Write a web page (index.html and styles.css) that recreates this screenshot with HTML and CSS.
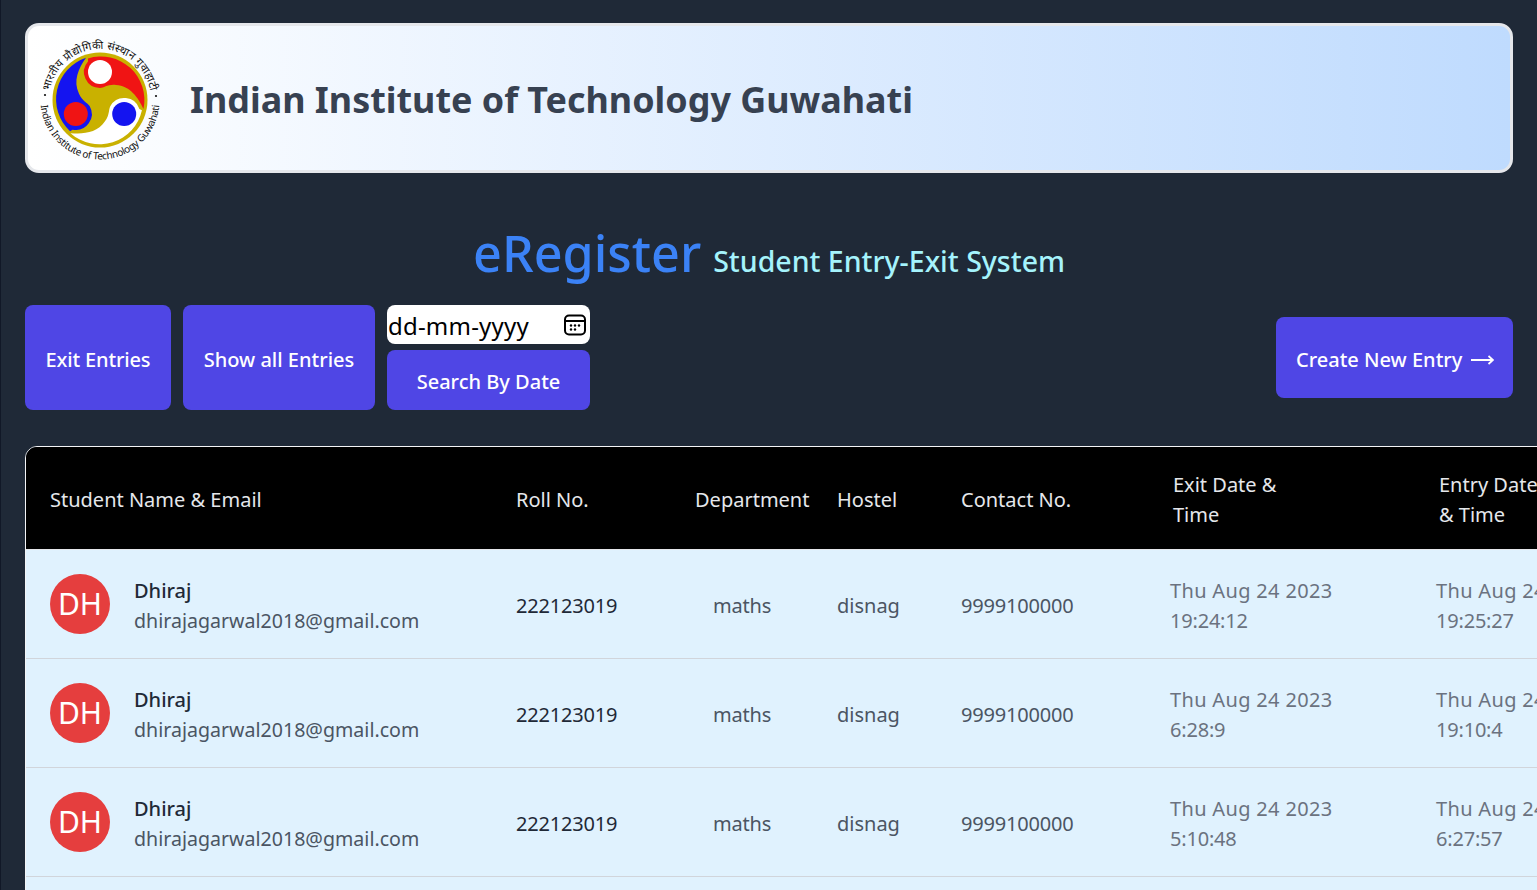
FILE: index.html
```html
<!DOCTYPE html>
<html lang="en">
<head>
<meta charset="utf-8">
<title>eRegister</title>
<link rel="stylesheet" href="styles.css">
</head>
<body>
<header class="banner">
  <svg class="logo" viewBox="-62 -62 124 124" width="124" height="124" aria-label="IIT Guwahati logo">
    <defs>
      <path id="lobe" d="M-12,-41.5 A43.5,43.5 0 0 1 43.5,9 C38,-3 30,-14 16,-15 C8,-16 4,-12 0,-12 A16,16 0 0 1 -12,-38.6 Z"/>
      <path id="top-arc" d="M-51,0 A51,51 0 0 1 51,0"/>
      <path id="bottom-arc" d="M-59.5,0 A59.5,59.5 0 0 0 59.5,0"/>
    </defs>
    <circle r="47.5" class="logo-disc"/>
    <use href="#lobe" class="logo-red"/>
    <use href="#lobe" class="logo-blue" transform="rotate(-120)"/>
    <use href="#lobe" class="logo-white" transform="rotate(120)"/>
    <circle cy="-28" r="12" class="logo-white"/>
    <circle cx="-24.2" cy="14" r="12" class="logo-red"/>
    <circle cx="24.2" cy="14" r="12" class="logo-blue"/>
    <text class="logo-text logo-hindi"><textPath href="#top-arc" startOffset="50%" text-anchor="middle" textLength="142">भारतीय प्रौद्योगिकी संस्थान गुवाहाटी</textPath></text>
    <text class="logo-text"><textPath href="#bottom-arc" startOffset="50%" text-anchor="middle" textLength="176">Indian Institute of Technology Guwahati</textPath></text>
    <circle cx="-55" cy="-5" r="1.1" class="logo-dot"/>
    <circle cx="56" cy="-4" r="1.1" class="logo-dot"/>
  </svg>
  <h1 class="banner-title">Indian Institute of Technology Guwahati</h1>
</header>

<div class="heading">
  <span class="heading-main">eRegister</span>
  <span class="heading-sub">Student Entry-Exit System</span>
</div>

<div class="toolbar">
  <div class="toolbar-left">
    <button class="btn btn-exit">Exit Entries</button>
    <button class="btn btn-all">Show all Entries</button>
    <form class="date-search">
      <div class="date-input">
        <span class="date-text">dd-mm-yyyy</span>
        <svg class="cal" viewBox="0 0 24 24" width="24" height="24">
          <rect x="2" y="2.5" width="20" height="19" rx="4" fill="none" stroke="#000" stroke-width="2"/>
          <path d="M3 8H21" stroke="#000" stroke-width="2"/>
          <g fill="#000">
            <circle cx="8" cy="12.5" r="1.2"/><circle cx="12" cy="12.5" r="1.2"/><circle cx="16" cy="12.5" r="1.2"/>
            <circle cx="8" cy="16.5" r="1.2"/><circle cx="12" cy="16.5" r="1.2"/>
          </g>
        </svg>
      </div>
      <button class="btn btn-search" type="button">Search By Date</button>
    </form>
  </div>
  <button class="btn btn-create">Create New Entry
    <svg viewBox="0 0 24 24" width="24" height="24" class="arrow"><path d="M1 12H23M18.5 8L23 12L18.5 16" fill="none" stroke="#fff" stroke-width="1.8"/></svg>
  </button>
</div>

<div class="table-wrap">
  <table class="entries">
    <colgroup>
      <col class="c-name"><col class="c-roll"><col class="c-dept"><col class="c-hostel"><col class="c-contact"><col class="c-exit"><col class="c-entry">
    </colgroup>
    <thead>
      <tr>
        <th>Student Name &amp; Email</th><th>Roll No.</th><th>Department</th><th>Hostel</th><th>Contact No.</th><th>Exit Date &amp;<br>Time</th><th>Entry Date<br>&amp; Time</th>
      </tr>
    </thead>
    <tbody>
      <tr>
        <td class="cell-person"><div class="person"><span class="avatar">DH</span><div class="who"><span class="name">Dhiraj</span><span class="email">dhirajagarwal2018@gmail.com</span></div></div></td>
        <td class="dark">222123019</td><td class="center">maths</td><td>disnag</td><td class="num">9999100000</td>
        <td class="date"><span class="day">Thu Aug 24 2023</span><br>19:24:12</td><td class="date"><span class="day">Thu Aug 24 2023</span><br>19:25:27</td>
      </tr>
      <tr>
        <td class="cell-person"><div class="person"><span class="avatar">DH</span><div class="who"><span class="name">Dhiraj</span><span class="email">dhirajagarwal2018@gmail.com</span></div></div></td>
        <td class="dark">222123019</td><td class="center">maths</td><td>disnag</td><td class="num">9999100000</td>
        <td class="date"><span class="day">Thu Aug 24 2023</span><br>6:28:9</td><td class="date"><span class="day">Thu Aug 24 2023</span><br>19:10:4</td>
      </tr>
      <tr>
        <td class="cell-person"><div class="person"><span class="avatar">DH</span><div class="who"><span class="name">Dhiraj</span><span class="email">dhirajagarwal2018@gmail.com</span></div></div></td>
        <td class="dark">222123019</td><td class="center">maths</td><td>disnag</td><td class="num">9999100000</td>
        <td class="date"><span class="day">Thu Aug 24 2023</span><br>5:10:48</td><td class="date"><span class="day">Thu Aug 24 2023</span><br>6:27:57</td>
      </tr>
      <tr>
        <td class="cell-person"><div class="person"><span class="avatar">DH</span><div class="who"><span class="name">Dhiraj</span><span class="email">dhirajagarwal2018@gmail.com</span></div></div></td>
        <td class="dark">222123019</td><td class="center">maths</td><td>disnag</td><td class="num">9999100000</td>
        <td class="date"><span class="day">Thu Aug 24 2023</span><br>5:1:20</td><td class="date"><span class="day">Thu Aug 24 2023</span><br>5:9:11</td>
      </tr>
    </tbody>
  </table>
</div>
</body>
</html>
```
FILE: styles.css
```css
* { box-sizing: border-box; }
html { overflow: hidden; height: 100%; }
body {
  margin: 0;
  padding: 23px 24px 0 24px;
  border-left: 1px solid #111827;
  background: #1f2937;
  font-family: "Noto Sans", "Open Sans", sans-serif;
  color: #4b5563;
}
.banner {
  display: flex;
  align-items: center;
  gap: 28px;
  height: 150px;
  padding-left: 10px;
  border: 3px solid #e5e7eb;
  border-radius: 14px;
  background: linear-gradient(to right, #ffffff, #bfdbfe);
}
.logo { flex: none; overflow: visible; margin-top: 3px; }
.logo-disc { fill: #c9b100; }
.logo-red { fill: #f01414; }
.logo-blue { fill: #1414f0; }
.logo-white { fill: #ffffff; }
.logo-dot { fill: #111; }
.logo-text { font-size: 10px; fill: #111; font-family: "Noto Sans", "Liberation Sans", sans-serif; }
.logo-hindi { font-size: 11px; }
.banner-title {
  margin: 2px 0 0;
  font-size: 35.9px;
  font-weight: 700;
  color: #374151;
}
.heading {
  display: flex;
  justify-content: center;
  align-items: baseline;
  gap: 12px;
  margin-top: 48px;
  height: 64px;
}
.heading-main { font-size: 50.3px; font-weight: 500; line-height: 64px; color: #3b82f6; }
.heading-sub { font-size: 28.5px; font-weight: 500; color: #a5f3fc; }
.toolbar {
  display: flex;
  justify-content: space-between;
  align-items: center;
  margin-top: 20px;
}
.toolbar-left { display: flex; gap: 12px; align-items: stretch; height: 105px; }
.btn {
  border: 0;
  border-radius: 8px;
  padding: 4px 0 0;
  background: #4f46e5;
  color: #fff;
  font-family: inherit;
  font-size: 20px;
  font-weight: 500;
}
.btn-exit { width: 146px; letter-spacing: -0.15px; }
.btn-all { width: 192px; }
.date-search { display: flex; flex-direction: column; gap: 6px; width: 203px; }
.date-input {
  display: flex;
  justify-content: space-between;
  align-items: center;
  height: 39px;
  padding: 0 3px 0 1px;
  border-radius: 8px;
  background: #fff;
  color: #000;
  font-size: 24px;
}
.date-text { letter-spacing: 0.2px; margin-top: 2px; }
.cal { flex: none; }
.btn-search { height: 60px; padding: 2px 0 0; }
.btn-create {
  display: flex;
  align-items: center;
  gap: 8px;
  height: 81px;
  width: 237px;
  padding: 4px 20px 0;
  white-space: nowrap;
}
.arrow { flex: none; }
.table-wrap {
  width: 1800px;
  margin-top: 36px;
  border: 1px solid #f3f4f6;
  border-radius: 12px 0 0 0;
  overflow: hidden;
}
.entries {
  width: 100%;
  table-layout: fixed;
  border-collapse: collapse;
  font-size: 20px;
}
.c-name { width: 466px; }
.c-roll { width: 179px; }
.c-dept { width: 142px; }
.c-hostel { width: 124px; }
.c-contact { width: 212px; }
.c-exit { width: 266px; }
.c-entry { width: 411px; }
th {
  height: 102px;
  padding: 4px 0 0 24px;
  background: #000;
  color: #e5e7eb;
  font-weight: 400;
  line-height: 30px;
  text-align: left;
}
td {
  height: 109px;
  padding: 4px 0 0 24px;
  background: #e0f2fe;
  border-top: 1px solid #d1d5db;
  line-height: 30px;
}
tbody tr:first-child td { border-top-color: #e5e7eb; }
td.cell-person { padding-top: 0; }
td.dark { color: #1f2937; letter-spacing: -0.2px; }
td.num { letter-spacing: -0.2px; }
td.center { padding-left: 0; text-align: center; letter-spacing: -0.2px; }
td.date { padding-left: 21px; color: #6b7280; letter-spacing: -0.2px; }
.day { letter-spacing: 0.33px; }
.person { display: flex; align-items: center; gap: 24px; }
.avatar {
  display: flex;
  justify-content: center;
  align-items: center;
  flex: none;
  width: 60px;
  height: 60px;
  border-radius: 50%;
  background: #e53e3e;
  color: #fff;
  font-size: 30px;
}
.who { display: flex; flex-direction: column; margin-top: 4px; }
.name { color: #1f2937; font-weight: 500; }
.email { color: #4b5563; font-size: 19.6px; }
```
